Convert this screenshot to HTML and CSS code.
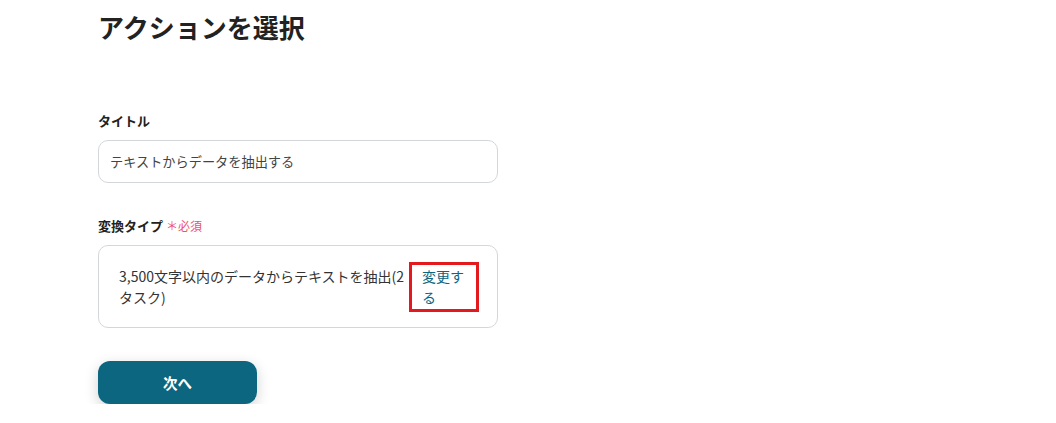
FILE: index.html
```html
<!DOCTYPE html>
<html lang="ja">
<head>
    <meta charset="UTF-8">
    <meta name="viewport" content="width=device-width, initial-scale=1.0">
    <title>アクションを選択</title>
    <link rel="stylesheet" href="styles.css">
</head>
<body>
    <div class="container">
        <h1 class="page-title">アクションを選択</h1>

        <div class="field field-title">
            <label class="field-label">タイトル</label>
            <div class="text-input">テキストからデータを抽出する</div>
        </div>

        <div class="field field-type">
            <label class="field-label">変換タイプ <span class="required">＊必須</span></label>
            <div class="type-box">
                <span class="type-text">3,500文字以内のデータからテキストを抽出(2タスク)</span>
                <div class="highlight">
                    <a class="change-link" href="#">変更する</a>
                </div>
            </div>
        </div>

        <button class="next-btn">次へ</button>
    </div>
</body>
</html>
```

FILE: styles.css
```css
body {
    font-family: "Noto Sans CJK JP", "Noto Sans", sans-serif;
    background-color: #fff;
    color: #333;
    margin: 0;
}
.container {
    padding: 0 0 0 98px;
    width: 400px;
}
.page-title {
    margin: 0;
    padding-top: 9px;
    font-size: 26px;
    line-height: 36px;
    font-weight: bold;
    color: #222;
}
.field {
    display: flex;
    flex-direction: column;
}
.field-title {
    margin-top: 66px;
}
.field-type {
    margin-top: 33px;
}
.field-label {
    font-size: 13px;
    line-height: 20px;
    font-weight: bold;
    color: #222;
    margin-bottom: 9px;
}
.required {
    color: #f0506e;
    font-weight: normal;
    font-size: 12px;
}
.text-input {
    box-sizing: border-box;
    height: 43px;
    border: 1px solid #d3d7dc;
    border-radius: 10px;
    padding: 0 11px;
    display: flex;
    align-items: center;
    font-size: 13.2px;
    color: #444;
}
.type-box {
    box-sizing: border-box;
    height: 83px;
    border: 1px solid #d3d7dc;
    border-radius: 10px;
    padding: 0 18px 0 20px;
    display: flex;
    align-items: center;
}
.type-text {
    flex: 1;
    font-size: 14px;
    line-height: 21px;
    color: #333;
    margin-right: -4px;
}
.highlight {
    border: 3px solid #e3191e;
    padding: 1px 12px 1px 10px;
}
.change-link {
    display: block;
    width: 42px;
    font-size: 14px;
    line-height: 21px;
    color: #0b6680;
    text-decoration: none;
}
.next-btn {
    margin-top: 33px;
    width: 159px;
    height: 43px;
    border: none;
    border-radius: 12px;
    background-color: #0c6680;
    color: #fff;
    font-family: inherit;
    font-size: 14.5px;
    font-weight: bold;
    box-shadow: 0 4px 14px rgba(0, 0, 0, 0.18);
}
```
